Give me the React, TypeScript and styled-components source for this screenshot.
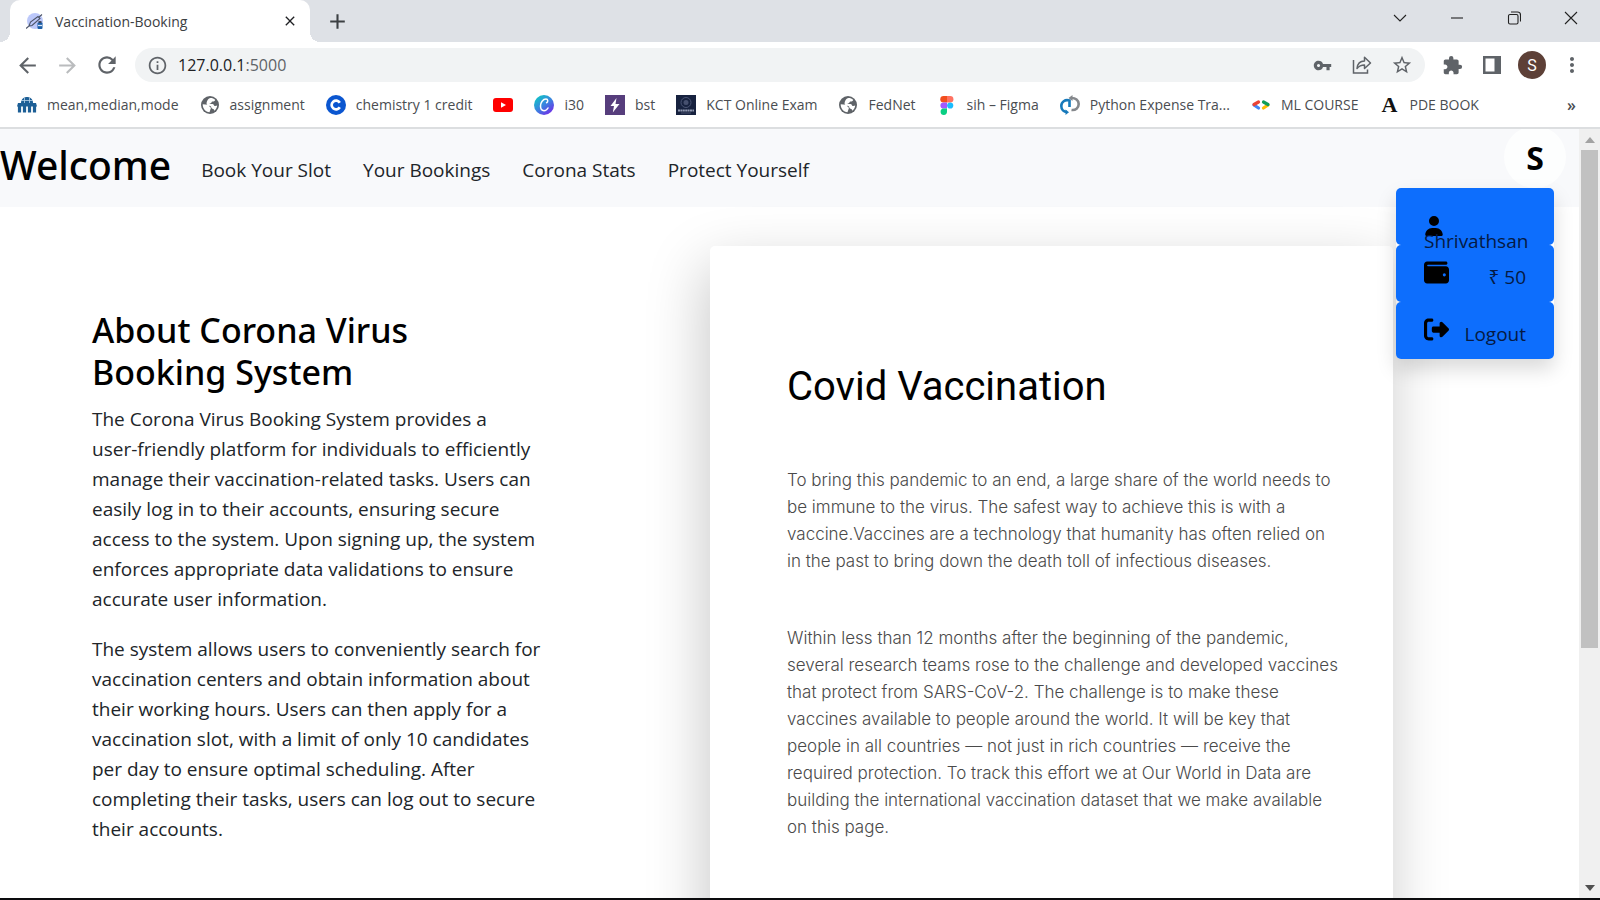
import React from "react";
import styled, { createGlobalStyle } from "styled-components";
import {
  MdArrowBack,
  MdArrowForward,
  MdRefresh,
  MdInfoOutline,
  MdVpnKey,
  MdStarBorder,
  MdExtension,
  MdMoreVert,
  MdClose,
  MdAdd,
} from "react-icons/md";
import { FaUser, FaWallet, FaRightFromBracket } from "react-icons/fa6";

const GlobalStyle = createGlobalStyle`
  *, *::before, *::after { box-sizing: border-box; }
  body { margin: 0; font-family: "Open Sans", "Noto Sans", sans-serif; color: #212529; }
  h1, h2, p { margin: 0; }
  button, input { font: inherit; color: inherit; border: 0; background: none; padding: 0; }
  a { color: inherit; text-decoration: none; }
`;

const Window = styled.div`
  display: flex;
  flex-direction: column;
  height: 100vh;
  overflow: hidden;
  background: #fff;
  border-bottom: 2px solid #0c0c0e;
`;

/* ---------- tab strip ---------- */

const TabStrip = styled.div`
  display: flex;
  flex: none;
  height: 42px;
  padding: 0 1px 0 10px;
  background: #dee1e6;
  color: #3c4043;
`;

const Tab = styled.div`
  position: relative;
  display: flex;
  align-items: center;
  gap: 12px;
  width: 300px;
  padding: 0 12px 0 16px;
  background: #fff;
  border-radius: 10px 10px 0 0;
  font-size: 14px;
  &::before,
  &::after {
    content: "";
    position: absolute;
    bottom: 0;
    width: 10px;
    height: 10px;
  }
  &::before {
    right: 100%;
    background: radial-gradient(circle at 0 0, transparent 10px, #fff 10px);
  }
  &::after {
    left: 100%;
    background: radial-gradient(circle at 100% 0, transparent 10px, #fff 10px);
  }
`;

const TabTitle = styled.span`
  flex: 1;
`;

const IconButton = styled.button<{ $size?: number; $color?: string }>`
  display: flex;
  flex: none;
  align-items: center;
  justify-content: center;
  width: ${(p) => p.$size ?? 40}px;
  height: ${(p) => Math.min(p.$size ?? 40, 36)}px;
  color: ${(p) => p.$color ?? "#5f6368"};
`;

const NewTab = styled(IconButton)`
  height: 42px;
  margin-left: 7px;
  color: #3c4043;
`;

const WindowControls = styled.div`
  display: flex;
  margin-left: auto;
`;

const ControlButton = styled.button`
  display: flex;
  align-items: center;
  justify-content: center;
  width: 57px;
  height: 36px;
  color: #222;
`;

/* ---------- toolbar ---------- */

const Toolbar = styled.div`
  display: flex;
  flex: none;
  align-items: center;
  height: 46px;
  padding: 0 8px 0 7px;
`;

const AddressBar = styled.div`
  display: flex;
  flex: 1;
  align-items: center;
  height: 34px;
  margin: 0 7px 0 8px;
  padding: 0 3px 0 12px;
  border-radius: 17px;
  background: #f1f3f4;
  color: #5f6368;
`;

const Url = styled.a`
  flex: 1;
  margin-left: 10px;
  font-size: 16px;
  b {
    font-weight: 400;
    color: #202124;
  }
`;

const Profile = styled.button`
  width: 28px;
  height: 28px;
  margin: 0 6px;
  border-radius: 50%;
  background: #5d4037;
  color: #fff;
  font-family: Roboto, sans-serif;
  font-size: 16px;
`;

/* ---------- bookmarks ---------- */

const Bookmarks = styled.nav`
  display: flex;
  flex: none;
  align-items: center;
  gap: 21px;
  height: 41px;
  padding: 0 24px 6px 17px;
  border-bottom: 2px solid #dcdee0;
  color: #4a4d51;
  font-size: 14px;
  white-space: nowrap;
`;

const Bookmark = styled.a`
  display: flex;
  align-items: center;
  gap: 10px;
  svg {
    flex: none;
  }
`;

const MoreBookmarks = styled.button`
  margin-left: auto;
  font-size: 16px;
  font-weight: 600;
`;

/* ---------- web page ---------- */

const Viewport = styled.div`
  display: flex;
  flex: 1;
  min-height: 0;
`;

const Page = styled.main`
  position: relative;
  flex: 1;
  min-width: 0;
  overflow: hidden;
`;

const Scrollbar = styled.div`
  display: flex;
  flex-direction: column;
  align-items: center;
  flex: none;
  width: 21px;
  background: #f0f0f0;
`;

const ScrollArrow = styled.button`
  display: flex;
  align-items: center;
  justify-content: center;
  width: 21px;
  height: 21px;
`;

const ScrollTrack = styled.div`
  flex: 1;
  width: 17px;
`;

const ScrollThumb = styled.div`
  height: calc(69% - 4px);
  background: #c1c1c1;
`;

const Header = styled.header`
  display: flex;
  align-items: flex-start;
  height: 78px;
  background: #f8f9fb;
`;

const Brand = styled.h1`
  margin-right: 30px;
  color: #000;
  font-family: "Noto Sans", sans-serif;
  font-size: 39px;
  font-weight: 500;
  line-height: 72px;
`;

const NavLinks = styled.nav`
  display: flex;
  gap: 32px;
  font-size: 19px;
  line-height: 82px;
`;

const Account = styled.div`
  position: absolute;
  top: -3px;
  right: 25px;
  width: 158px;
`;

const Avatar = styled.button`
  display: block;
  width: 62px;
  height: 62px;
  margin: 0 -12px 0 auto;
  border-radius: 50%;
  background: #fdfefe;
  color: #000;
  font-size: 32px;
  font-weight: 700;
  line-height: 64px;
`;

const Menu = styled.div`
  border-radius: 5px;
  box-shadow: 0 10px 20px rgba(0, 0, 0, 0.15);
`;

const MenuItem = styled.button<{ $stacked?: boolean }>`
  display: flex;
  flex-direction: ${(p) => (p.$stacked ? "column" : "row")};
  align-items: flex-start;
  justify-content: ${(p) => (p.$stacked ? "flex-start" : "space-between")};
  width: 100%;
  height: 57px;
  padding: ${(p) => (p.$stacked ? 28 : 15)}px 28px 0;
  border-radius: 5px;
  background: #0d6efd;
  color: #000;
  font-size: 19px;
  svg {
    flex: none;
  }
`;

const MenuLabel = styled.span<{ $stacked?: boolean }>`
  position: relative;
  z-index: 1;
  margin-top: ${(p) => (p.$stacked ? -10 : 2)}px;
  color: #051a44;
  line-height: 30px;
`;

const Columns = styled.div`
  display: grid;
  grid-template-columns: 450fr 683fr;
  gap: 168px;
  padding: 0 186px 0 92px;
`;

const About = styled.section`
  padding-top: 102px;
  font-size: 19px;
  line-height: 30px;
  p + p {
    margin-top: 20px;
  }
`;

const AboutTitle = styled.h2`
  margin-bottom: 11px;
  color: #000;
  font-family: "Noto Sans", sans-serif;
  font-size: 34px;
  font-weight: 500;
  line-height: 42px;
`;

const Card = styled.section`
  height: 900px;
  margin-top: 39px;
  padding: 116px 52px 0 77px;
  border-radius: 5px;
  background: #fff;
  box-shadow: -4px 20px 60px rgba(0, 0, 0, 0.22);
  color: #4a4a4a;
  font-family: Inter, sans-serif;
  font-size: 17px;
  font-weight: 300;
  line-height: 27px;
  p {
    margin-bottom: 50px;
  }
`;

const CardTitle = styled.h2`
  margin-bottom: 55px;
  color: #000;
  font-family: Roboto, sans-serif;
  font-size: 40px;
  font-weight: 400;
  line-height: 50px;
`;

/* ---------- drawings ---------- */

const Syringe = () => (
  <svg width="17" height="17" viewBox="0 0 17 17" aria-hidden="true">
    <circle cx="9" cy="8" r="8" fill="#bcc8fa" />
    <path d="M0 15.500 3 13M3 13l1.500-4L12 3.500l2 2L6 12.500zM12.500 4.500 16 1.500" stroke="#4c5468" strokeWidth="1.100" fill="none" />
    <rect x="11.500" y="9.500" width="5" height="6.500" rx="1" fill="#1c5fa8" />
    <path d="M12.500 9h3" stroke="#2b3140" strokeWidth="1.600" />
    <path d="M12 12.500h4" stroke="#dbe7f7" strokeWidth="1.300" />
  </svg>
);

const Museum = () => (
  <svg width="20" height="20" viewBox="0 0 20 20" aria-hidden="true">
    <path d="M4 8C4 4 7 2 10 2s6 2 6 6z" fill="#1d5f96" />
    <path d="M1 8h18l1 3.500H0z" fill="#1d5f96" />
    <path d="M2.500 11v6.500M7.500 11v6.500M12.500 11v6.500M17.500 11v6.500" stroke="#1d5f96" strokeWidth="3.200" />
    <path d="M4 5.500h12M7.500 3v5M12.500 3v5" stroke="#b9d4ea" strokeWidth=".8" />
  </svg>
);

const Coursera = () => (
  <svg width="20" height="20" viewBox="0 0 20 20" aria-hidden="true">
    <circle cx="10" cy="10" r="10" fill="#0b56d0" />
    <path d="M13.800 7.700a4.400 4.400 0 1 0 0 4.600" stroke="#fff" strokeWidth="2.700" fill="none" />
  </svg>
);

const YouTube = () => (
  <svg width="20" height="20" viewBox="0 0 20 20" aria-hidden="true">
    <rect y="3" width="20" height="14" rx="3" fill="#f00" />
    <path d="M8 7.200v5.600l5-2.800z" fill="#fff" />
  </svg>
);

const Canva = () => (
  <svg width="20" height="20" viewBox="0 0 20 20" aria-hidden="true">
    <defs>
      <linearGradient id="canva" x1="0.1" y1="0.1" x2="0.8" y2="1">
        <stop offset="0" stopColor="#10c4c6" />
        <stop offset="0.5" stopColor="#3b82e0" />
        <stop offset="1" stopColor="#7427e8" />
      </linearGradient>
    </defs>
    <circle cx="10" cy="10" r="10" fill="url(#canva)" />
    <path d="M12.600 7.800c1.700-.8 1.500-3.700-.6-3.700-3 0-5.500 3.500-5.500 7 0 3 1.400 4.600 3.500 4.600 1.900 0 3.200-1.200 4-2.700" stroke="#fff" strokeWidth="1.500" fill="none" strokeLinecap="round" />
  </svg>
);

const Bolt = () => (
  <svg width="20" height="20" viewBox="0 0 20 20" aria-hidden="true">
    <rect width="20" height="20" fill="#563d7c" />
    <path d="M11.500 3 5.500 11h3.500L7.800 17.500 14.500 9h-4z" fill="#fff" />
  </svg>
);

const Crest = () => (
  <svg width="20" height="20" viewBox="0 0 20 20" aria-hidden="true">
    <rect width="20" height="20" fill="#17223f" />
    <circle cx="10" cy="7.500" r="5" fill="none" stroke="#4a5474" />
    <circle cx="10" cy="7.500" r="2.500" fill="#46506f" />
    <path d="M2 15.500h16" stroke="#8f97b0" strokeWidth="1.800" strokeDasharray="2 .4" />
    <path d="M5 18h10" stroke="#535c78" strokeWidth=".8" />
  </svg>
);

const Figma = () => (
  <svg width="20" height="20" viewBox="0 0 20 20" aria-hidden="true">
    <path d="M10 1H6.500a3.200 3.200 0 0 0 0 6.400H10z" fill="#f24e1e" />
    <path d="M10 1h3.200a3.200 3.200 0 0 1 0 6.400H10z" fill="#ff7262" />
    <path d="M10 7.400H6.500a3.100 3.100 0 0 0 0 6.200H10z" fill="#a259ff" />
    <circle cx="13.200" cy="10.500" r="3.100" fill="#1abcfe" />
    <path d="M10 13.600H6.500a3.200 3.200 0 1 0 3.500 3.200z" fill="#0acf83" />
  </svg>
);

const Loops = () => (
  <svg width="20" height="20" viewBox="0 0 20 20" aria-hidden="true" fill="none" strokeWidth="2.600">
    <path d="M9.500 12V5.500C5 4 1.300 7 1.300 11c0 3.500 2.500 5.800 5.700 6" stroke="#1779ba" />
    <path d="M5.500 14.500 9 17.200 5.500 20z" fill="#1779ba" />
    <path d="M11 3c4.500-.3 7.700 2.300 7.700 6 0 4-3.200 6.500-7.200 6" stroke="#85888c" />
    <path d="M12.500 0v6L8.500 3z" fill="#85888c" />
  </svg>
);

const Developers = () => (
  <svg width="20" height="20" viewBox="0 0 20 20" aria-hidden="true" strokeWidth="3.200" strokeLinecap="round">
    <path d="M3 10l4.500 3" stroke="#4285f4" />
    <path d="M3 9.500 7.500 7" stroke="#ea4335" />
    <path d="M17 10l-4.500 3" stroke="#fbbc04" />
    <path d="M17 9.500 12.500 7" stroke="#0f9d58" />
  </svg>
);

const SerifLetter = styled.span`
  width: 20px;
  color: #111;
  font: 700 22px/20px "Liberation Serif", serif;
  text-align: center;
`;

const Globe = () => (
  <svg width="20" height="20" viewBox="0 0 20 20" aria-hidden="true">
    <circle cx="10" cy="10" r="9" fill="#5f6368" />
    <path d="M2.700 9.200 8 9.800c1.500.2 1 1.700 2 2.200.9.500 1.300 1 .6 2L9.500 17.300C5.500 17 2.600 13.500 2.700 9.200z" fill="#fff" />
    <path d="M10.500 3c1.800 0 3.500.6 4.700 2-.4 1.300-1.500 1.400-2.900 1.600-.8.200-.6 1-1.200 1.500-.6.500-1.500.2-1.500 1h2.900c1.500 0 1 1.600 2.200 1.800 1 .2 1.600-.2 2.500-.4-.2 2.300-1.300 4-2.900 5.200-.3-1.300-.8-1.700-1.800-1.900-1.300-.2-1-1.900-1.800-2.500-1-.9-2.700-.8-3.900-1.900C6 7 8 3.500 10.500 3z" fill="#fff" />
  </svg>
);

const ShareIcon = () => (
  <svg width="20" height="20" viewBox="0 0 20 20" fill="none" stroke="currentColor" strokeWidth="1.500" aria-hidden="true">
    <path d="M1.500 5v13h14v-3.500" />
    <path d="M5 13.500c.5-5 3-7.500 7.500-7.500V2.300L18.500 8l-6 5.500V10c-3.500 0-5.500 1-7.500 3.500z" strokeLinejoin="round" />
  </svg>
);

const SidePanelIcon = () => (
  <svg width="18" height="18" viewBox="0 0 18 18" aria-hidden="true">
    <path fillRule="evenodd" d="M0 0h18v18H0zM2.500 2.500v13h9v-13z" fill="currentColor" />
  </svg>
);

type Glyph = "chevron" | "minimize" | "restore" | "close";
const glyphs: Record<Glyph, string> = {
  chevron: "M1 4l6 6 6-6",
  minimize: "M1 7h12",
  restore: "M3 3.500h6.500a1.500 1.500 0 0 1 1.500 1.500v6.500a1.500 1.500 0 0 1-1.500 1.500H3A1.500 1.500 0 0 1 1.500 11.500V5A1.500 1.500 0 0 1 3 3.500zM4 1h6.500A3 3 0 0 1 13.500 4v6.500",
  close: "M1 1l12 12M13 1 1 13",
};

const WindowGlyph = ({ name }: { name: Glyph }) => (
  <svg width="14" height="14" viewBox="0 0 14 14" fill="none" stroke="currentColor" strokeWidth="1.100" aria-hidden="true">
    <path d={glyphs[name]} />
  </svg>
);

const bookmarks: { icon: React.ReactNode; label?: string; name?: string }[] = [
  { icon: <Museum />, label: "mean,median,mode" },
  { icon: <Globe />, label: "assignment" },
  { icon: <Coursera />, label: "chemistry 1 credit" },
  { icon: <YouTube />, name: "YouTube" },
  { icon: <Canva />, label: "i30" },
  { icon: <Bolt />, label: "bst" },
  { icon: <Crest />, label: "KCT Online Exam" },
  { icon: <Globe />, label: "FedNet" },
  { icon: <Figma />, label: "sih – Figma" },
  { icon: <Loops />, label: "Python Expense Tra..." },
  { icon: <Developers />, label: "ML COURSE" },
  { icon: <SerifLetter aria-hidden="true">A</SerifLetter>, label: "PDE BOOK" },
];

const links = ["Book Your Slot", "Your Bookings", "Corona Stats", "Protect Yourself"];

export default function App() {
  return (
    <>
      <GlobalStyle />
      <Window>
        <TabStrip>
          <Tab>
            <Syringe />
            <TabTitle>Vaccination-Booking</TabTitle>
            <IconButton $size={16} $color="#202124" aria-label="Close tab">
              <MdClose size={18} />
            </IconButton>
          </Tab>
          <NewTab aria-label="New tab">
            <MdAdd size={25} />
          </NewTab>
          <WindowControls>
            <ControlButton aria-label="Search tabs"><WindowGlyph name="chevron" /></ControlButton>
            <ControlButton aria-label="Minimize"><WindowGlyph name="minimize" /></ControlButton>
            <ControlButton aria-label="Restore"><WindowGlyph name="restore" /></ControlButton>
            <ControlButton aria-label="Close"><WindowGlyph name="close" /></ControlButton>
          </WindowControls>
        </TabStrip>
        <Toolbar>
          <IconButton aria-label="Back"><MdArrowBack size={25} /></IconButton>
          <IconButton $color="#babcbe" aria-label="Forward"><MdArrowForward size={25} /></IconButton>
          <IconButton aria-label="Reload"><MdRefresh size={26} /></IconButton>
          <AddressBar>
            <MdInfoOutline size={21} />
            <Url href="#"><b>127.0.0.1</b>:5000</Url>
            <IconButton aria-label="Passwords"><MdVpnKey size={19} /></IconButton>
            <IconButton aria-label="Share"><ShareIcon /></IconButton>
            <IconButton aria-label="Bookmark this page"><MdStarBorder size={22} /></IconButton>
          </AddressBar>
          <IconButton aria-label="Extensions"><MdExtension size={21} /></IconButton>
          <IconButton aria-label="Side panel"><SidePanelIcon /></IconButton>
          <Profile>S</Profile>
          <IconButton aria-label="Menu"><MdMoreVert size={24} /></IconButton>
        </Toolbar>
        <Bookmarks>
          {bookmarks.map((b) => (
            <Bookmark key={b.label ?? b.name} href="#" aria-label={b.name}>
              {b.icon}
              {b.label && <span>{b.label}</span>}
            </Bookmark>
          ))}
          <MoreBookmarks>»</MoreBookmarks>
        </Bookmarks>
        <Viewport>
          <Page>
            <Header>
              <Brand>Welcome</Brand>
              <NavLinks>
                {links.map((l) => (
                  <a key={l} href="#">{l}</a>
                ))}
              </NavLinks>
            </Header>
            <Columns>
              <About>
                <AboutTitle>About Corona Virus Booking System</AboutTitle>
                <p>
                  The Corona Virus Booking System provides a
                  <br />
                  user-friendly platform for individuals to efficiently manage their vaccination-related
                  tasks. Users can easily log in to their accounts, ensuring secure access to the system.
                  Upon signing up, the system enforces appropriate data validations to ensure accurate
                  user information.
                </p>
                <p>
                  The system allows users to conveniently search for vaccination centers and obtain
                  information about their working hours. Users can then apply for a vaccination slot,
                  with a limit of only 10 candidates per day to ensure optimal scheduling. After
                  completing their tasks, users can log out to secure their accounts.
                </p>
              </About>
              <Card>
                <CardTitle>Covid Vaccination</CardTitle>
                <p>
                  To bring this pandemic to an end, a large share of the world needs to be immune to the
                  virus. The safest way to achieve this is with a vaccine.Vaccines are a technology that
                  humanity has often relied on in the past to bring down the death toll of infectious
                  diseases.
                </p>
                <p>
                  Within less than 12 months after the beginning of the pandemic, several research teams
                  rose to the challenge and developed vaccines that protect from SARS-CoV-2. The
                  challenge is to make these vaccines available to people around the world. It will be
                  key that people in all countries — not just in rich countries — receive the required
                  protection. To track this effort we at Our World in Data are building the international
                  vaccination dataset that we make available on this page.
                </p>
              </Card>
            </Columns>
            <Account>
              <Avatar>S</Avatar>
              <Menu>
                <MenuItem $stacked>
                  <FaUser size={20} />
                  <MenuLabel $stacked>Shrivathsan</MenuLabel>
                </MenuItem>
                <MenuItem>
                  <FaWallet size={25} />
                  <MenuLabel>₹ 50</MenuLabel>
                </MenuItem>
                <MenuItem>
                  <FaRightFromBracket size={25} />
                  <MenuLabel>Logout</MenuLabel>
                </MenuItem>
              </Menu>
            </Account>
          </Page>
          <Scrollbar>
            <ScrollArrow aria-label="Scroll up">
              <svg width="10" height="6" viewBox="0 0 10 6"><path d="M0 6 5 0l5 6z" fill="#a3a3a3" /></svg>
            </ScrollArrow>
            <ScrollTrack><ScrollThumb /></ScrollTrack>
            <ScrollArrow aria-label="Scroll down">
              <svg width="10" height="6" viewBox="0 0 10 6"><path d="M0 0h10L5 6z" fill="#505050" /></svg>
            </ScrollArrow>
          </Scrollbar>
        </Viewport>
      </Window>
    </>
  );
}
